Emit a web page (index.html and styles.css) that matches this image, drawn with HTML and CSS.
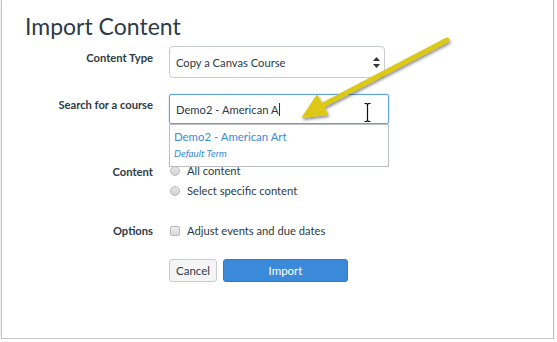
FILE: index.html
```html
<!DOCTYPE html>
<html lang="en">
<head>
    <meta charset="UTF-8">
    <title>Import Content</title>
    <link rel="stylesheet" href="styles.css">
</head>
<body>
<div class="frame">
    <h1>Import Content</h1>

    <div class="row row-type">
        <label class="label">Content Type</label>
        <div class="control">
            <div class="select">
                <span>Copy a Canvas Course</span>
                <svg class="updown" width="7" height="11" viewBox="0 0 7 11"><path d="M3.5 0 L7 4 L0 4 Z M0 7 L7 7 L3.5 11 Z" fill="#333"/></svg>
            </div>
        </div>
    </div>

    <div class="row row-search">
        <label class="label">Search for a course</label>
        <div class="control search-wrap">
            <div class="search">Demo2 - American A<span class="caret"></span></div>
            <div class="menu">
                <div class="menu-title">Demo2 - American Art</div>
                <div class="menu-term">Default Term</div>
            </div>
        </div>
    </div>

    <div class="row row-content">
        <label class="label">Content</label>
        <div class="control">
            <div class="choice"><span class="radio"></span>All content</div>
            <div class="choice"><span class="radio"></span>Select specific content</div>
        </div>
    </div>

    <div class="row row-options">
        <label class="label">Options</label>
        <div class="control">
            <div class="choice"><span class="check"></span>Adjust events and due dates</div>
        </div>
    </div>

    <div class="row row-buttons">
        <div class="label"></div>
        <div class="control buttons">
            <button class="btn">Cancel</button>
            <button class="btn btn-primary">Import</button>
        </div>
    </div>

    <svg class="overlay" width="557" height="342" viewBox="0 0 557 342">
        <defs>
            <filter id="shadow" x="-20%" y="-20%" width="140%" height="140%">
                <feDropShadow dx="1" dy="2" stdDeviation="1.5" flood-color="#000" flood-opacity="0.45"/>
            </filter>
        </defs>
        <g filter="url(#shadow)">
            <path d="M447 40 L323 105" stroke="#dcc815" stroke-width="5" stroke-linecap="round"/>
            <path d="M303 117 L317 96 L327 114 Z" fill="#dcc815" stroke="#dcc815" stroke-width="2" stroke-linejoin="round"/>
        </g>
        <g stroke="#111" stroke-width="1.2" fill="none">
            <path d="M367.5 104 L367.5 121"/>
            <path d="M364.5 103.5 L366.5 103.5 L367.5 104.5 L368.5 103.5 L370.5 103.5"/>
            <path d="M364.5 121.5 L366.5 121.5 L367.5 120.5 L368.5 121.5 L370.5 121.5"/>
        </g>
    </svg>
</div>
</body>
</html>
```

FILE: styles.css
```css
body {
    margin: 0;
    font-family: 'Lato', 'Liberation Sans', sans-serif;
    font-size: 11.2px;
    color: #2d3b45;
    background-color: #ffffff;
}

.frame {
    position: relative;
    box-sizing: border-box;
    width: 553px;
    height: 339px;
    margin-left: 1px;
    padding: 12px 0 0 0;
    border: 1px solid #c4c4c4;
    border-top: none;
    box-shadow: 0 1px 1px rgba(0, 0, 0, 0.35);
    background-color: #ffffff;
}

h1 {
    margin: 0 0 0 23px;
    font-size: 23px;
    font-weight: 400;
    line-height: 28px;
    color: #2d3b45;
}

.row {
    display: flex;
    align-items: flex-start;
}

.label {
    width: 151px;
    flex: none;
    text-align: right;
    font-weight: bold;
    line-height: 20px;
    padding-right: 16px;
    box-sizing: content-box;
}

.control {
    display: flex;
    flex-direction: column;
}

.row-type {
    margin-top: 6px;
}

.row-type .label {
    padding-top: 2px;
}

.select {
    box-sizing: border-box;
    width: 216px;
    height: 32px;
    display: flex;
    align-items: center;
    justify-content: space-between;
    padding: 0 4px 0 6px;
    border: 1px solid #c7cdd1;
    border-radius: 4px;
    background-color: #ffffff;
}

.row-search {
    margin-top: 16px;
}

.row-search .label {
    padding-top: 1px;
}

.search-wrap {
    position: relative;
}

.search {
    box-sizing: border-box;
    width: 220px;
    height: 30px;
    display: flex;
    align-items: center;
    padding: 0 6px;
    border: 1px solid #5fa2e0;
    border-radius: 2px;
    box-shadow: 0 0 2px rgba(95, 162, 224, 0.5);
}

.caret {
    display: inline-block;
    width: 1px;
    height: 13px;
    background-color: #2d3b45;
}

.menu {
    position: absolute;
    top: 30px;
    left: 0;
    box-sizing: border-box;
    width: 220px;
    height: 43px;
    padding: 4px 4px 0 4px;
    border: 1px solid #b8bec2;
    background-color: #ffffff;
    z-index: 2;
}

.menu-title {
    color: #3b8ad9;
    font-size: 11.4px;
    line-height: 16px;
}

.menu-term {
    color: #3b8ad9;
    font-size: 9.9px;
    font-style: italic;
    line-height: 16px;
}

.row-content {
    margin-top: 37px;
}

.row-content .label {
    padding-top: 1px;
}

.choice {
    display: flex;
    align-items: center;
    line-height: 20px;
}

.radio {
    width: 8px;
    height: 8px;
    margin: 0 7px 0 1px;
    border: 1px solid #b9b9b9;
    border-radius: 50%;
    background: linear-gradient(#e6e6e6, #d2d2d2);
}

.check {
    width: 8px;
    height: 8px;
    margin: 0 7px 0 1px;
    border: 1px solid #b9b9b9;
    border-radius: 2px;
    background: linear-gradient(#eeeeee, #d8d8d8);
}

.row-options {
    margin-top: 20px;
}

.row-buttons {
    margin-top: 18px;
}

.buttons {
    flex-direction: row;
    gap: 6px;
}

.btn {
    height: 23px;
    width: 48px;
    padding: 0;
    font-family: 'Lato', 'Liberation Sans', sans-serif;
    font-size: 11.5px;
    color: #2d3b45;
    background-color: #f5f5f5;
    border: 1px solid #c7cdd1;
    border-radius: 3px;
}

.btn-primary {
    width: 125px;
    color: #ffffff;
    background-color: #3b8ad9;
    border-color: #2f7ac7;
}

.overlay {
    position: absolute;
    top: 0;
    left: -2px;
    pointer-events: none;
    z-index: 3;
}
```
